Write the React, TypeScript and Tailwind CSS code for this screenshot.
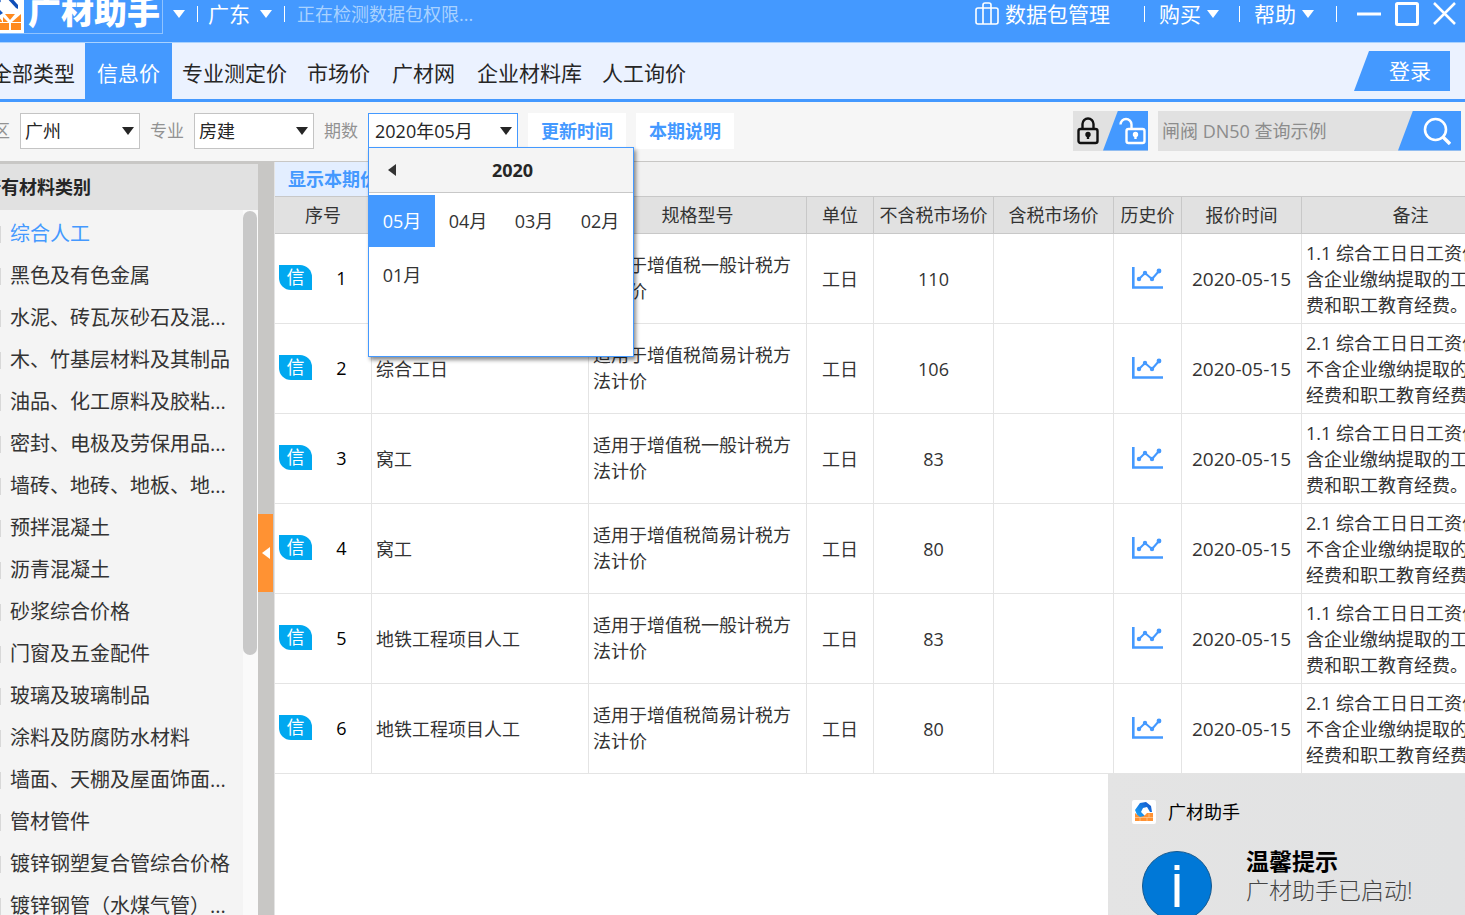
import React from 'react';
import clsx from 'clsx';

const TABS = [
  { name: '全部类型', pad: 'px-2.5' },
  { name: '信息价', pad: 'px-3' },
  { name: '专业测定价', pad: 'px-2.5' },
  { name: '市场价', pad: 'px-2.5' },
  { name: '广材网', pad: 'px-3' },
  { name: '企业材料库', pad: 'px-2.5' },
  { name: '人工询价', pad: 'px-2.5' },
];

const CATEGORIES = [
  '综合人工',
  '黑色及有色金属',
  '水泥、砖瓦灰砂石及混...',
  '木、竹基层材料及其制品',
  '油品、化工原料及胶粘...',
  '密封、电极及劳保用品...',
  '墙砖、地砖、地板、地...',
  '预拌混凝土',
  '沥青混凝土',
  '砂浆综合价格',
  '门窗及五金配件',
  '玻璃及玻璃制品',
  '涂料及防腐防水材料',
  '墙面、天棚及屋面饰面...',
  '管材管件',
  '镀锌钢塑复合管综合价格',
  '镀锌钢管（水煤气管）...',
];

const COLUMNS = [
  { title: '序号', width: 'w-[97px]' },
  { title: '名称', width: 'w-[217px]' },
  { title: '规格型号', width: 'w-[218px]' },
  { title: '单位', width: 'w-[67px]' },
  { title: '不含税市场价', width: 'w-[120px]' },
  { title: '含税市场价', width: 'w-[120px]' },
  { title: '历史价', width: 'w-[68px]' },
  { title: '报价时间', width: 'w-[120px]' },
  { title: '备注', width: 'w-[218px]' },
];

const GENERAL = {
  spec: '适用于增值税一般计税方法计价',
  remark: ['1.1 综合工日日工资价格', '含企业缴纳提取的工会经', '费和职工教育经费。'],
};

const SIMPLE = {
  spec: '适用于增值税简易计税方法计价',
  remark: ['2.1 综合工日日工资价格', '不含企业缴纳提取的工会', '经费和职工教育经费。'],
};

const ROWS = [
  { name: '综合工日', price: 110, ...GENERAL },
  { name: '综合工日', price: 106, ...SIMPLE },
  { name: '窝工', price: 83, ...GENERAL },
  { name: '窝工', price: 80, ...SIMPLE },
  { name: '地铁工程项目人工', price: 83, ...GENERAL },
  { name: '地铁工程项目人工', price: 80, ...SIMPLE },
];

const MONTHS = ['05月', '04月', '03月', '02月', '01月'];

const Caret: React.FC<{ className?: string }> = ({ className }) => (
  <svg viewBox="0 0 12 8" className={clsx('h-2 w-3 shrink-0', className)} fill="currentColor">
    <path d="M0 0h12L6 8z" />
  </svg>
);

const Divider: React.FC<{ className?: string }> = ({ className }) => (
  <span className={clsx('h-4 w-px shrink-0 bg-white', className)} />
);

const LogoMark: React.FC = () => (
  <svg viewBox="0 0 37 37" className="size-[37px] shrink-0">
    <rect width="37" height="37" fill="#fff" />
    <path d="M20 0l3 0 8 9v4l-2-1L18 0z" fill="#0f4fb8" />
    <path d="M4 12L12 2l2 3-4 6 6 6-3 2z" fill="#1257c4" />
    <path d="M4 20h7l4 5v1H4zM18 18h10l-5 6zM34 18v8h-9zM16 21l5 5h-5z" fill="#ff8a1f" />
    <path d="M4 27h18v7H4zM24 27h10v7H24z" fill="#ff8a1f" />
  </svg>
);

const AppIcon: React.FC = () => (
  <svg viewBox="0 0 24 24" className="size-6 shrink-0">
    <defs>
      <linearGradient id="arm" x1="0" y1="1" x2="1" y2="0">
        <stop offset="0" stopColor="#1cb0ff" />
        <stop offset="1" stopColor="#1450c8" />
      </linearGradient>
    </defs>
    <rect width="24" height="24" rx="2" fill="#fff" />
    <path d="M3 10L8 3l6-1 5 4 1 6-2 0-3-5-4 1-2 4 4 4-2 3-5-2z" fill="url(#arm)" />
    <path d="M3 13l5 4 4-1 3-3h6v8H3z" fill="#ff9233" />
    <path d="M3 17.500h18M8 17.500V21M15 17.500V21M17 13.500v4" stroke="#ffd9b0" strokeWidth="0.600" />
  </svg>
);

const TitleBar: React.FC = () => (
  <header className="flex h-[42px] items-start bg-[#4499ff] pr-2 pl-[19px] text-[21px] text-white">
    <div className="flex h-[34px] items-end overflow-hidden border-r border-b border-[#8fc3ff]">
      <LogoMark />
      <span className="pr-0.5 pl-1 text-[33px] leading-[42px] font-black">广材助手</span>
    </div>
    <div className="flex h-7 flex-1 items-center leading-7">
      <Caret className="ml-2.5" />
      <Divider className="ml-3" />
      <button className="ml-2.5 flex items-center gap-2.5">
        广东 <Caret />
      </button>
      <Divider className="ml-3" />
      <span className="ml-3 text-lg text-[#a9d2ff]">正在检测数据包权限...</span>

      <button className="ml-auto flex items-center gap-1.5">
        <svg viewBox="0 0 24 24" className="size-6" fill="none" stroke="currentColor" strokeWidth="1.6">
          <rect x="1" y="6" width="22" height="16" rx="2" />
          <path d="M8 22V3q0-2 2-2h4q2 0 2 2v19" />
        </svg>
        数据包管理
      </button>
      <Divider className="ml-[34px]" />
      <button className="ml-3.5 flex items-center gap-1.5">
        购买 <Caret />
      </button>
      <Divider className="ml-5" />
      <button className="ml-3.5 flex items-center gap-1.5">
        帮助 <Caret />
      </button>
      <Divider className="ml-[22px]" />
      <div className="ml-5 flex gap-3.5">
        <button aria-label="最小化">
          <svg viewBox="0 0 24 24" className="size-6" stroke="currentColor" strokeWidth="3">
            <path d="M0 12h24" />
          </svg>
        </button>
        <button aria-label="最大化">
          <svg viewBox="0 0 24 24" className="size-6" fill="none" stroke="currentColor" strokeWidth="3">
            <rect x="1.500" y="1.500" width="21" height="21" rx="1" />
          </svg>
        </button>
        <button aria-label="关闭">
          <svg viewBox="0 0 24 24" className="size-6" stroke="currentColor" strokeWidth="2.5">
            <path d="M1 1l21 21M22 1L1 22" />
          </svg>
        </button>
      </div>
    </div>
  </header>
);

const TabBar: React.FC = () => (
  <nav className="flex h-[60px] border-t border-b-3 border-t-[#a9d2ff] border-b-[#4499ff] bg-[#ebf2ff] pr-[15px] pl-[13px] text-[21px]">
    {TABS.map((tab, i) => (
      <button
        key={tab.name}
        className={clsx('pt-1.5 whitespace-nowrap', tab.pad, i === 1 ? 'bg-[#4499ff] text-white' : 'text-[#262626]')}
      >
        {tab.name}
      </button>
    ))}
    <button className="mt-2 ml-auto h-10 w-24 bg-[#4499ff] pt-0.5 pl-4 text-white [clip-path:polygon(15px_0,100%_0,100%_100%,0_100%)]">
      登录
    </button>
  </nav>
);

interface FilterProps {
  id: string;
  label: string;
  value: string;
  className: string;
}

const Filter: React.FC<FilterProps> = ({ id, label, value, className }) => (
  <>
    <label htmlFor={id} className="text-[17px] whitespace-nowrap text-[#929292]">
      {label}
    </label>
    <div className="relative">
      <select id={id} className={clsx('h-9 appearance-none border bg-white text-lg text-[#262626]', className)}>
        <option>{value}</option>
      </select>
      <Caret className="pointer-events-none absolute top-3.5 right-1.5" />
    </div>
  </>
);

const MonthPicker: React.FC = () => (
  <div className="absolute top-[34px] left-0 z-10 h-[210px] w-[266px] border border-[#4499ff] bg-white text-lg text-[#333] shadow-[2px_3px_4px_rgba(0,0,0,0.45)]">
    <div className="flex h-[45px] items-center border-b border-[#c8c8c8] bg-[#f4f4f4] pr-1.5 pl-[17px]">
      <button aria-label="上一年">
        <Caret className="rotate-90" />
      </button>
      <span className="flex-1 text-center font-bold text-[#262626]">2020</span>
    </div>
    <div className="grid grid-cols-4 gap-y-0.5 pt-0.5">
      {MONTHS.map((month, i) => (
        <button key={month} className={clsx('h-[52px]', i === 0 && 'bg-[#4499ff] text-white')}>
          {month}
        </button>
      ))}
    </div>
  </div>
);

const Toolbar: React.FC = () => (
  <div className="flex h-[60px] items-center border-b border-[#c8c7c5] bg-[#f6f6f6] pr-1 pb-0.5 pl-2 text-[#262626]">
    <div className="flex items-center gap-2.5">
      <Filter id="area" label="地区" value="广州" className="w-[120px] border-[#c4c4c4] pl-1" />
      <Filter id="major" label="专业" value="房建" className="w-[120px] border-[#c4c4c4] pl-1" />
      <div className="relative flex items-center gap-2.5">
        <Filter id="period" label="期数" value="2020年05月" className="w-[150px] border-[#4499ff] pl-1.5" />
        <div className="absolute top-0 left-11">
          <MonthPicker />
        </div>
      </div>
      <button className="h-9 bg-white px-[13px] text-lg font-bold whitespace-nowrap text-[#4499ff]">更新时间</button>
      <button className="h-9 bg-white px-[13px] text-lg font-bold whitespace-nowrap text-[#4499ff]">本期说明</button>
    </div>

    <div className="ml-auto flex h-10 bg-[#e1e1e1]">
      <button aria-label="锁定" className="pl-1">
        <svg viewBox="0 0 22 28" className="h-7 w-[22px]" fill="none" stroke="#111" strokeWidth="2.4">
          <rect x="1.500" y="12" width="19" height="14" rx="2" />
          <path d="M5.500 12V7a5.500 5.500 0 0 1 11 0v5" />
          <circle cx="11" cy="17.500" r="1.500" fill="#111" />
          <path d="M11 18v4" />
        </svg>
      </button>
      <button
        aria-label="解锁"
        className="ml-1 flex w-[45px] items-center justify-end bg-[#4499ff] pr-0.5 [clip-path:polygon(15px_0,100%_0,100%_100%,0_100%)]"
      >
        <svg viewBox="0 0 27 28" className="h-7 w-[27px]" fill="none" stroke="#fff" strokeWidth="2.4">
          <rect x="7.500" y="12" width="18" height="14" rx="2" />
          <path d="M1.500 7.500a5.500 5.500 0 0 1 11 0V12" />
          <circle cx="16.500" cy="17.500" r="1.500" fill="#fff" />
          <path d="M16.500 18v4" />
        </svg>
      </button>
    </div>

    <form className="ml-2.5 flex h-10 bg-[#e1e1e1]">
      <input
        type="search"
        aria-label="查询"
        placeholder="闸阀 DN50 查询示例"
        className="w-60 bg-transparent pl-1 text-lg placeholder:text-[#8c8c8c]"
      />
      <button
        type="button"
        aria-label="搜索"
        className="flex w-[63px] items-center justify-center bg-[#4499ff] pl-3.5 [clip-path:polygon(15px_0,100%_0,100%_100%,0_100%)]"
      >
        <svg viewBox="0 0 28 28" className="size-7" fill="none" stroke="#fff" strokeWidth="2.6">
          <circle cx="12.500" cy="12.500" r="10.500" />
          <path d="M20 20l7 7" strokeWidth="3.4" />
        </svg>
      </button>
    </form>
  </div>
);

const Sidebar: React.FC = () => (
  <aside className="flex w-[290px] shrink-0 flex-col border-t-2 border-[#c8c7c5] bg-[#f4f4f4]">
    <h2 className="h-[46px] shrink-0 bg-[#e1e1e1] pl-[15px] text-lg leading-[46px] font-bold text-[#262626]">
      所有材料类别
    </h2>
    <div className="flex min-h-0 flex-1">
      <ul className="flex-1 overflow-hidden pt-[3px] text-xl text-[#333]">
        {CATEGORIES.map((name, i) => (
          <li key={name}>
            <label className={clsx('flex h-[42px] items-center gap-[9px] pl-4 whitespace-nowrap', i === 0 && 'text-[#4499ff]')}>
              <input type="checkbox" className="size-[17px] shrink-0 appearance-none border border-[#d8d8d8] bg-white" />
              {name}
            </label>
          </li>
        ))}
      </ul>
      <div className="w-[15px] shrink-0 bg-[#fafafa] pt-px">
        <div className="h-[63%] w-3.5 rounded-full bg-[#c8c8c8]" />
      </div>
    </div>
  </aside>
);

const TrendIcon: React.FC = () => (
  <svg viewBox="0 0 31 22" className="mx-auto mb-0.5 h-[22px] w-[31px]" fill="none" stroke="#4499ff" strokeWidth="2">
    <path d="M1.300 0v20.500H31" strokeWidth="2.600" />
    <path d="M7 12l6-6 7 6 7-8" />
    <g fill="#4499ff" stroke="none">
      <circle cx="7" cy="12" r="2.200" />
      <circle cx="13" cy="6" r="2.200" />
      <circle cx="20" cy="12" r="2.200" />
      <circle cx="27" cy="4" r="2.400" />
    </g>
  </svg>
);

const PriceTable: React.FC = () => (
  <table className="w-[1245px] table-fixed border-separate border-spacing-0 text-lg leading-[26px] text-[#333]">
    <thead>
      <tr>
        {COLUMNS.map((col) => (
          <th
            key={col.title}
            className={clsx('h-[37px] border-r border-b border-[#c8c8c8] bg-[#e1e1e1] p-0 font-normal whitespace-nowrap', col.width)}
          >
            {col.title}
          </th>
        ))}
      </tr>
    </thead>
    <tbody className="[&_td]:h-[90px] [&_td]:border-r [&_td]:border-b [&_td]:border-[#e4e4e4] [&_td]:p-0">
      {ROWS.map((row, i) => (
        <tr key={i}>
          <td>
            <div className="flex items-center pb-0.5 pl-1">
              <span className="h-[25px] w-[33px] rounded-tr-xl rounded-bl-xl bg-[#00a8f0] text-center leading-[25px] text-white">信</span>
              <span className="flex-1 text-center text-black">{i + 1}</span>
            </div>
          </td>
          <td>
            <div className="pl-1">{row.name}</div>
          </td>
          <td>
            <div className="px-1 pb-0.5">{row.spec}</div>
          </td>
          <td className="text-center">工日</td>
          <td className="text-center">{row.price}</td>
          <td />
          <td>
            <TrendIcon />
          </td>
          <td className="text-center text-[19px]">2020-05-15</td>
          <td>
            <div className="pl-1">
              {row.remark.map((line) => (
                <div key={line} className="whitespace-nowrap">
                  {line}
                </div>
              ))}
            </div>
          </td>
        </tr>
      ))}
    </tbody>
  </table>
);

const Toast: React.FC = () => (
  <div
    role="status"
    className="fixed right-0 bottom-0 h-[141px] w-[357px] overflow-hidden bg-linear-to-r from-[#e4e4e4] to-[#e1e2e3] pt-6 pl-6"
  >
    <div className="flex items-center gap-3 text-lg leading-7 text-black">
      <AppIcon />
      广材助手
    </div>
    <div className="mt-[21px] flex gap-[34px] pl-2.5">
      <svg viewBox="0 0 70 70" className="mt-1 size-[70px] shrink-0">
        <circle cx="35" cy="35" r="34.500" fill="#0078d7" stroke="#15598f" />
        <path d="M32.500 14h5v5h-5zM32.500 23h5v33h-5z" fill="#fff" />
      </svg>
      <div className="text-[23px] leading-[29px]">
        <p className="font-bold text-black">温馨提示</p>
        <p className="font-light text-[#444]">广材助手已启动!</p>
      </div>
    </div>
  </div>
);

export default function App() {
  return (
    <div className="h-screen overflow-hidden bg-white font-['Open_Sans','Noto_Sans_CJK_SC',sans-serif]">
      <div className="-ml-8 flex h-full flex-col">
        <TitleBar />
        <TabBar />
        <Toolbar />
        <div className="flex min-h-0 flex-1">
          <Sidebar />
          <div className="flex w-4 shrink-0 items-center bg-[#c8c7c5] pt-7">
            <button aria-label="收起" className="flex h-[78px] w-[15px] items-center justify-center bg-[#ff9233] text-white">
              <Caret className="rotate-90" />
            </button>
          </div>
          <main className="min-w-0 flex-1 overflow-hidden border-l border-[#e4e4e4]">
            <div className="flex h-[35px] border-b border-[#c8c8c8] bg-[#f1f1f1]">
              <button className="bg-[#e3eeff] px-[13px] text-lg font-bold text-[#4499ff]">显示本期价格</button>
            </div>
            <PriceTable />
          </main>
        </div>
      </div>
      <Toast />
    </div>
  );
}
